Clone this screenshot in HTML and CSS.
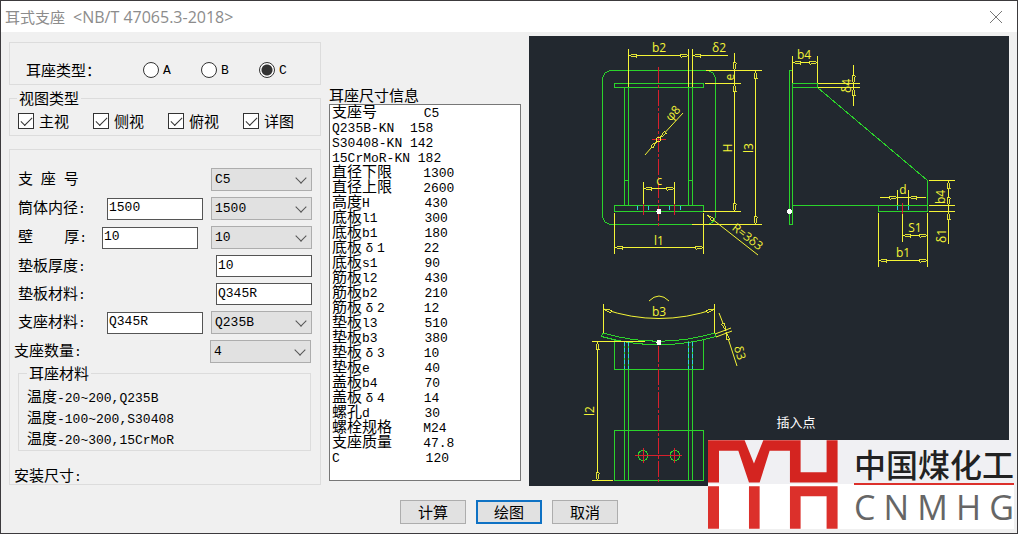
FILE: index.html
```html
<!DOCTYPE html>
<html lang="zh-CN">
<head>
<meta charset="utf-8">
<title>耳式支座 &lt;NB/T 47065.3-2018&gt;</title>
<link rel="stylesheet" href="styles.css">
</head>
<body>
<main class="window">
  <header class="titlebar">
    <h1 class="title"><span class="zh">耳式支座</span>&lt;NB/T 47065.3-2018&gt;</h1>
    <button class="close" type="button" aria-label="关闭">
      <svg width="14" height="14" viewBox="0 0 14 14"><path d="M1 1L13 13M13 1L1 13" stroke="#777" fill="none"/></svg>
    </button>
  </header>

  <div class="content">
    <form class="settings" id="settings">
      <div class="group types" role="radiogroup" aria-labelledby="type-label">
        <span id="type-label" class="zh types-label">耳座类型：</span>
        <label class="option"><input type="radio" name="type">A</label>
        <label class="option"><input type="radio" name="type">B</label>
        <label class="option"><input type="radio" name="type" checked>C</label>
      </div>

      <fieldset class="group views">
        <legend class="zh">视图类型</legend>
        <label class="check zh"><input type="checkbox" checked>主视</label>
        <label class="check zh"><input type="checkbox" checked>侧视</label>
        <label class="check zh"><input type="checkbox" checked>俯视</label>
        <label class="check zh"><input type="checkbox" checked>详图</label>
      </fieldset>

      <div class="group params">
        <div class="row">
          <label for="no"><span class="zh">支</span> <span class="zh">座</span> <span class="zh">号</span></label>
          <span class="select"><select id="no"><option>C5</option></select></span>
        </div>
        <div class="row">
          <label for="dia"><span class="zh">筒体内径</span>:</label>
          <input type="text" id="dia" value="1500">
          <span class="select"><select aria-label="筒体内径"><option>1500</option></select></span>
        </div>
        <div class="row row-loose">
          <label for="wall"><span class="zh">壁</span>    <span class="zh">厚</span>:</label>
          <input type="text" id="wall" value="10">
          <span class="select"><select aria-label="壁厚"><option>10</option></select></span>
        </div>
        <div class="row">
          <label for="pad"><span class="zh">垫板厚度</span>:</label>
          <input type="text" id="pad" value="10">
        </div>
        <div class="row">
          <label for="padmat"><span class="zh">垫板材料</span>:</label>
          <input type="text" id="padmat" value="Q345R">
        </div>
        <div class="row">
          <label for="mat"><span class="zh">支座材料</span>:</label>
          <input type="text" id="mat" value="Q345R">
          <span class="select"><select aria-label="支座材料"><option>Q235B</option></select></span>
        </div>
        <div class="row row-out">
          <label for="count"><span class="zh">支座数量</span>:</label>
          <span class="select"><select id="count"><option>4</option></select></span>
        </div>
        <fieldset class="group materials">
          <legend class="zh">耳座材料</legend>
          <p><span class="zh">温度</span>-20~200,Q235B</p>
          <p><span class="zh">温度</span>-100~200,S30408</p>
          <p><span class="zh">温度</span>-20~300,15CrMoR</p>
        </fieldset>
        <p class="install"><span class="zh">安装尺寸</span>:</p>
      </div>
    </form>

    <section class="info">
      <h2 class="zh">耳座尺寸信息</h2>
      <ul class="list">
        <li><span class="zh">支座号</span>      C5</li>
        <li>Q235B-KN  158</li>
        <li>S30408-KN 142</li>
        <li>15CrMoR-KN 182</li>
        <li><span class="zh">直径下限</span>    1300</li>
        <li><span class="zh">直径上限</span>    2600</li>
        <li><span class="zh">高度</span>H       430</li>
        <li><span class="zh">底板</span>l1      300</li>
        <li><span class="zh">底板</span>b1      180</li>
        <li><span class="zh">底板</span><span class="greek">δ</span>1     22</li>
        <li><span class="zh">底板</span>s1      90</li>
        <li><span class="zh">筋板</span>l2      430</li>
        <li><span class="zh">筋板</span>b2      210</li>
        <li><span class="zh">筋板</span><span class="greek">δ</span>2     12</li>
        <li><span class="zh">垫板</span>l3      510</li>
        <li><span class="zh">垫板</span>b3      380</li>
        <li><span class="zh">垫板</span><span class="greek">δ</span>3     10</li>
        <li><span class="zh">垫板</span>e       40</li>
        <li><span class="zh">盖板</span>b4      70</li>
        <li><span class="zh">盖板</span><span class="greek">δ</span>4     14</li>
        <li><span class="zh">螺孔</span>d       30</li>
        <li><span class="zh">螺栓规格</span>    M24</li>
        <li><span class="zh">支座质量</span>    47.8</li>
        <li>C           120</li>
      </ul>
    </section>

    <svg class="drawing" viewBox="529 36 480 450" preserveAspectRatio="xMinYMin meet" role="img" aria-label="耳式支座图">
      <defs>
        <marker id="a" viewBox="0 0 9 4" refX="9" refY="2" markerWidth="9" markerHeight="4" markerUnits="userSpaceOnUse" orient="auto-start-reverse">
          <path d="M9 2L1 .5V3.500Z" fill="#22282f" stroke="#f4f436" stroke-width=".9"/>
        </marker>
      </defs>

      <g class="green">
        <rect x="602.500" y="70.500" width="113" height="154" rx="9"/>
        <rect x="614.500" y="83.500" width="89" height="4"/>
        <path d="M624.500 87V205M628.500 87V205M688.500 87V205M692.500 87V205M624 180.500H629M688 180.500H693"/>
        <rect x="614.500" y="205.500" width="89" height="6"/>
        <rect x="789.500" y="70.500" width="3" height="154"/>
        <path d="M793 83.500H817.500V87.500H793M817.500 87.500L927.500 180.500V211.500H878.500V205.500M793 205.500H928"/>
        <path d="M603 333Q659 349.500 714.500 333L716 336.500Q659 353 601.500 336.500Z"/>
        <path d="M614.500 340V369.500H703.500V340M624.500 341V480M628.500 341V480M688.500 341V480M692.500 341V480"/>
        <rect x="614.500" y="430.500" width="89" height="50"/>
        <circle cx="643" cy="455.500" r="5"/>
        <circle cx="675" cy="455.500" r="5"/>
      </g>
      <g class="cyan">
        <path d="M637.500 206V212M648.500 206V212M669.500 206V212M680.500 206V212M897.500 206V212M908.500 206V212"/>
        <path d="M624.500 342V369M628.500 342V369M688.500 342V369M692.500 342V369"/>
      </g>
      <g class="red">
        <path class="axis" d="M658.500 67V228M658.500 346V483"/>
        <path d="M643.500 203V215M674.500 203V215M902.500 203V215M652 139.500H666M635 455.500H651M648 455.500H669M668 455.500H682M643.500 448V463M674.500 448V463"/>
      </g>
      <g class="yellow">
        <path d="M628.500 49V87M688.500 49V87M692.500 49V87M706 70.500H762M705 83.500H741M703 211.500H741M692 224.500H762M643.500 182V204M674.500 182V204M614.500 213V254M703.500 213V254"/>
        <path class="dim" d="M628.500 55.500H688.500"/>
        <path marker-start="url(#a)" d="M692.500 55.500H728"/>
        <path marker-end="url(#a)" d="M734.500 53V70.500"/>
        <path d="M734.500 70V84"/>
        <path class="dim" d="M734.500 83.500V211.500"/>
        <path class="dim" d="M755.500 70.500V224.500"/>
        <path class="dim" d="M643.500 188.500H674.500"/>
        <path class="dim" d="M614.500 247.500H703.500"/>
        <path class="smooth" marker-start="url(#a)" d="M707 215L758 255"/>
        <path class="smooth" marker-end="url(#a)" d="M683 113L660 138"/>
        <path class="smooth" marker-end="url(#a)" d="M645 155L657 141"/>
        <circle cx="658.500" cy="139.500" r="2"/>

        <path d="M792.500 56V83M817.500 56V83M818 83.500H860M818 87.500H860M929 180.500H955M929 205.500H955M929 211.500H955M897.500 190V205M908.500 190V205M902.500 214V242M878.500 213V267M927.500 213V267"/>
        <path class="dim" d="M792.500 62.500H817.500"/>
        <path marker-end="url(#a)" d="M853.500 65V83.500"/>
        <path marker-end="url(#a)" d="M853.500 106V87.500"/>
        <path class="dim" d="M948.500 180.500V205.500"/>
        <path marker-end="url(#a)" d="M948.500 244V211.500"/>
        <path marker-end="url(#a)" d="M880 197.500H897.500"/>
        <path marker-end="url(#a)" d="M926 197.500H908.500"/>
        <path d="M897 197.500H909M948.500 205V212M853.500 83V88"/>
        <path class="dim" d="M902.500 235.500H927.500"/>
        <path class="dim" d="M878.500 260.500H927.500"/>

        <path d="M603.500 304V333M714.500 304V333M592 341.500H645M592 480.500H613"/>
        <path class="dim smooth" d="M603.500 309Q659 328 714.500 309"/>
        <path class="smooth" d="M649 301Q659 291 669 301M715 334L731 328M716 337L732 331"/>
        <path class="smooth" marker-end="url(#a)" d="M719 313L726 331"/>
        <path class="smooth" marker-end="url(#a)" d="M737 366L726 332"/>
        <path class="dim" d="M597.500 341.500V480.500"/>
      </g>
      <g class="labels">
        <text x="659" y="52">b2</text>
        <text x="719" y="52">δ2</text>
        <text transform="translate(734 77) rotate(-90)">e</text>
        <text transform="translate(732 148) rotate(-90)">H</text>
        <text transform="translate(753 148) rotate(-90)">l3</text>
        <text x="659" y="185">c</text>
        <text x="659" y="245">l1</text>
        <text transform="translate(676 116) rotate(-48)">φ8</text>
        <text transform="translate(745 240) rotate(38)">R=3δ3</text>
        <text x="804" y="59">b4</text>
        <text transform="translate(851 86) rotate(-90)">δ4</text>
        <text x="903" y="194">d</text>
        <text transform="translate(945 197) rotate(-90)">b4</text>
        <text transform="translate(946 236) rotate(-90)">δ1</text>
        <text x="915" y="232">S1</text>
        <text x="903" y="257">b1</text>
        <text x="659" y="316">b3</text>
        <text transform="translate(594 411) rotate(-90)">l2</text>
        <text transform="translate(736 354) rotate(72)">δ3</text>
        <text class="insert" x="796" y="427">插入点</text>
      </g>
      <g fill="#fff">
        <circle cx="659" cy="211.500" r="2.500"/>
        <circle cx="789.500" cy="211.500" r="2.500"/>
        <circle cx="659" cy="342.500" r="2.500"/>
      </g>
    </svg>
  </div>

  <footer class="actions">
    <button class="btn zh" type="button">计算</button>
    <button class="btn btn-default zh" type="submit" form="settings">绘图</button>
    <button class="btn zh" type="button">取消</button>
  </footer>

  <aside class="brand">
    <svg class="brand-mark" viewBox="0 0 390 266" aria-hidden="true">
      <path fill="#d42420" d="M0 0H110L138 70L166 0H278V96H356V0H389V127H246V32H185L155 127H123L91 32H33V127H0Z"/>
      <path fill="#dc302b" d="M0 138H33V266H0ZM123 138H155V266H123ZM246 138H389V266H356V168H278V266H246Z"/>
    </svg>
    <div class="brand-text">
      <div class="brand-zh"><span>中</span><span>国</span><span>煤</span><span>化</span><span>工</span></div>
      <div class="brand-en"><span>C</span><span>N</span><span>M</span><span>H</span><span>G</span></div>
    </div>
  </aside>
</main>
</body>
</html>
```

FILE: styles.css
```css
* {
  box-sizing: border-box;
}

body {
  margin: 0;
  font: 13px/16px "Liberation Mono", "Noto Sans CJK SC", monospace;
  color: #000;
  background: #f0f0f0;
}

h1, h2, p, ul {
  margin: 0;
  padding: 0;
  font-weight: 400;
}

.zh {
  font-family: "Noto Sans CJK SC", sans-serif;
  font-size: 15px;
}

.window {
  position: relative;
  display: flex;
  flex-direction: column;
  min-height: 100vh;
  border: 1px solid #3c3a3d;
  background: #f0f0f0;
}

.titlebar {
  display: flex;
  align-items: center;
  justify-content: space-between;
  height: 31px;
  padding: 0 14px 0 4px;
  background: #fff;
}

.title {
  display: flex;
  align-items: center;
  gap: 8px;
  font: 16px/20px "Open Sans", sans-serif;
  color: #8c8c8c;
}

.close {
  display: flex;
  padding: 0;
  border: 0;
  background: none;
}

.content {
  display: grid;
  grid-template-columns: 312px 192px 1fr;
  gap: 8px;
  align-items: start;
  padding: 4px 8px 0;
}

.settings {
  display: flex;
  flex-direction: column;
  padding-top: 6px;
}

.group {
  min-width: 0;
  margin: 0;
  border: 1px solid #dcdcdc;
}

.types {
  display: flex;
  align-items: center;
  height: 43px;
  padding: 12px 0 0 16px;
}

.types-label {
  width: 117px;
}

.option {
  display: flex;
  align-items: flex-end;
  gap: 4px;
  width: 58px;
  line-height: 14px;
}

input[type="radio"] {
  appearance: none;
  width: 16px;
  height: 16px;
  margin: 0;
  border: 1px solid #333;
  border-radius: 50%;
  background: #fff;
}

input[type="radio"]:checked {
  background: radial-gradient(circle, #333 5px, #fff 6px);
}

.views {
  display: flex;
  height: 48px;
  margin-top: 3px;
  padding: 0 0 0 8px;
}

legend {
  line-height: 20px;
  padding: 0 2px;
}

.views legend {
  margin-left: -1px;
}

.check {
  display: flex;
  align-items: center;
  gap: 5px;
  width: 75px;
  height: 26px;
}

input[type="checkbox"] {
  appearance: none;
  display: grid;
  place-items: center;
  width: 16px;
  height: 16px;
  margin: 0;
  border: 1px solid #333;
  background: #fff;
}

input[type="checkbox"]:checked::before {
  content: "";
  width: 10px;
  height: 5px;
  margin-bottom: 3px;
  border: solid #333;
  border-width: 0 0 1px 1px;
  rotate: -45deg;
}

.params {
  display: flex;
  flex-direction: column;
  gap: 6px;
  margin-top: 13px;
  padding: 18px 8px 0;
}

.row {
  display: flex;
  align-items: center;
  gap: 8px;
}

.row-loose {
  gap: 13px;
}

.row-out {
  margin: 0 1px 0 -4px;
}

.row label {
  margin-right: auto;
  white-space: pre;
}

input[type="text"] {
  width: 96px;
  height: 22px;
  padding: 0 1px 2px;
  border: 1px solid #555;
  background: #fff;
  font: inherit;
}

.select {
  position: relative;
  display: flex;
  width: 101px;
}

.select select {
  appearance: none;
  width: 100%;
  height: 23px;
  padding: 0 3px;
  border: 1px solid #adadad;
  border-radius: 0;
  background: #e1e1e1;
  color: #000;
  font: inherit;
}

.select::after {
  content: "";
  position: absolute;
  top: 6px;
  right: 7px;
  width: 7px;
  height: 7px;
  border: solid #555;
  border-width: 0 1px 1px 0;
  rotate: 45deg;
  pointer-events: none;
}

.materials {
  height: 88px;
  margin: -6px 1px 0 0;
  padding: 5px 8px 0;
}

.materials p {
  height: 21px;
  line-height: 21px;
}

.install {
  height: 16px;
  margin: 11px 0 0 -4px;
  line-height: 20px;
}

.materials p .zh,
.install .zh,
.list .zh {
  line-height: 0;
}

.info h2 {
  padding-top: 50px;
  line-height: 18px;
}

.list {
  height: 377px;
  padding: 1px 2px;
  border: 1px solid #777;
  background: #fff;
  list-style: none;
}

.list li {
  height: 15px;
  line-height: 15px;
  white-space: pre;
}

.greek {
  display: inline-block;
  width: 15px;
  text-align: center;
}

.drawing {
  display: block;
  width: 100%;
  background: #22282f;
}

.drawing path,
.drawing rect,
.drawing circle {
  shape-rendering: crispEdges;
}

.drawing .smooth {
  shape-rendering: auto;
}

.green {
  fill: none;
  stroke: #2bd42b;
}

.cyan {
  fill: none;
  stroke: #2fd3e0;
  stroke-dasharray: 4 2;
}

.red {
  fill: none;
  stroke: #d8202c;
}

.axis {
  stroke-dasharray: 16 2 3 2;
}

.yellow {
  fill: none;
  stroke: #f4f436;
}

.dim {
  marker-start: url(#a);
  marker-end: url(#a);
}

.labels {
  fill: #f4f436;
  font: 12px "Open Sans", sans-serif;
  text-anchor: middle;
}

.labels .insert {
  fill: #fff;
  font: 13px "Noto Sans CJK SC", sans-serif;
}

.actions {
  display: flex;
  justify-content: center;
  gap: 10px;
  padding: 14px 0 8px;
}

.btn {
  width: 66px;
  height: 24px;
  padding: 0;
  border: 1px solid #adadad;
  background: #e1e1e1;
  color: #000;
  line-height: 20px;
}

.btn-default {
  border: 2px solid #0f72c4;
}

.brand {
  position: absolute;
  right: 3px;
  bottom: 4px;
  display: flex;
  gap: 16px;
  width: 306px;
  height: 89px;
  background: linear-gradient(#f0f0f3 44px, #fff 44px);
}

.brand-mark {
  width: 130px;
  height: 89px;
}

.brand-text {
  flex: 1;
}

.brand-zh,
.brand-en {
  display: flex;
  justify-content: space-between;
}

.brand-zh {
  height: 45px;
  border-bottom: 2px solid #dc302b;
  font: 500 32px/46px "Noto Sans CJK SC", sans-serif;
  color: #222;
}

.brand-en {
  font: 34px/44px "Open Sans", sans-serif;
  color: #666;
}
```
